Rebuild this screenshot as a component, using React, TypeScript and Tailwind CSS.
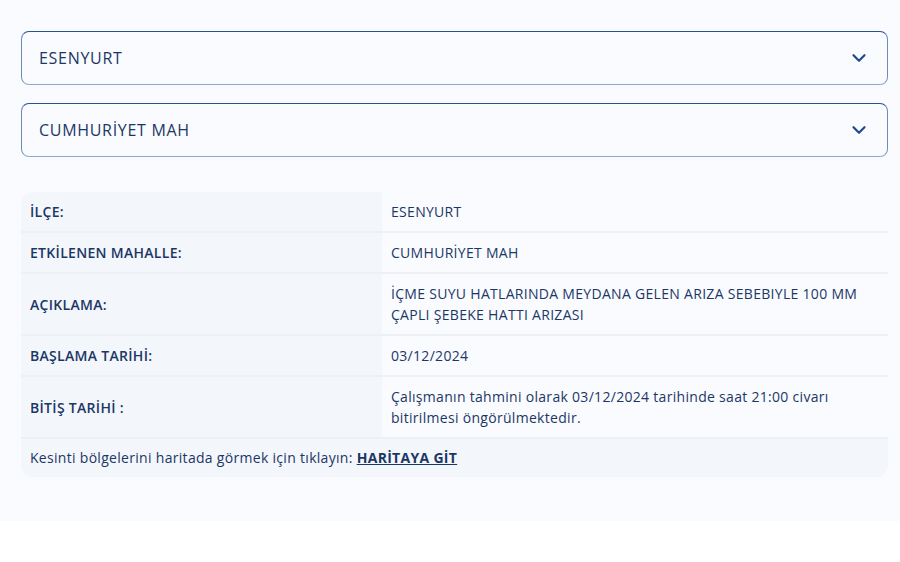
import { ChevronDown } from "lucide-react";

type Row = { label: string; value: React.ReactNode };

const rows: Row[] = [
  { label: "İLÇE:", value: "ESENYURT" },
  { label: "ETKİLENEN MAHALLE:", value: "CUMHURİYET MAH" },
  {
    label: "AÇIKLAMA:",
    value: (
      <>
        İÇME SUYU HATLARINDA MEYDANA GELEN ARIZA SEBEBIYLE 100 MM
        <br />
        ÇAPLI ŞEBEKE HATTI ARIZASI
      </>
    ),
  },
  { label: "BAŞLAMA TARİHİ:", value: "03/12/2024" },
  {
    label: "BİTİŞ TARİHİ :",
    value: (
      <>
        Çalışmanın tahmini olarak 03/12/2024 tarihinde saat 21:00 civarı
        <br />
        bitirilmesi öngörülmektedir.
      </>
    ),
  },
];

function Select({ value }: { value: string }) {
  return (
    <div className="flex h-[54px] items-center justify-between rounded-lg border border-[#6f8bb8] border-t-[#2a5090] border-b-[#90a6cc] pl-[17px] pr-[17px]">
      <span className="text-[16px] font-medium tracking-[0.7px] text-[#1c3766]">{value}</span>
      <ChevronDown className="h-[22px] w-[22px] text-[#1f4a8a]" strokeWidth={2.4} />
    </div>
  );
}

export default function App() {
  return (
    <div className="min-h-[562px] bg-white font-['Open_Sans',sans-serif] text-[#1c3766]">
      <div className="h-[521px] bg-[#f9fbfe] pl-[21px] pr-[12px] pt-[31px]">
        <div className="flex flex-col gap-[18px]">
          <Select value="ESENYURT" />
          <Select value="CUMHURİYET MAH" />
        </div>

        <div className="mt-[35px] overflow-hidden rounded-xl text-[14px] leading-[21px] tracking-[0.3px]">
          {rows.map((row) => (
            <div key={row.label} className="grid grid-cols-[361px_1fr] border-b-2 border-[#edf0f5]">
              <div className="flex items-center bg-[#f3f6fb] px-[9px] py-[9px] font-semibold">{row.label}</div>
              <div className="whitespace-nowrap bg-[#f9fbfe] px-[9px] py-[9px]">{row.value}</div>
            </div>
          ))}
          <div className="bg-[#f3f6fb] px-[9px] py-[8px] leading-[22px]">
            Kesinti bölgelerini haritada görmek için tıklayın:{" "}
            <a href="#" className="font-bold underline">
              HARİTAYA GİT
            </a>
          </div>
        </div>
      </div>
    </div>
  );
}
